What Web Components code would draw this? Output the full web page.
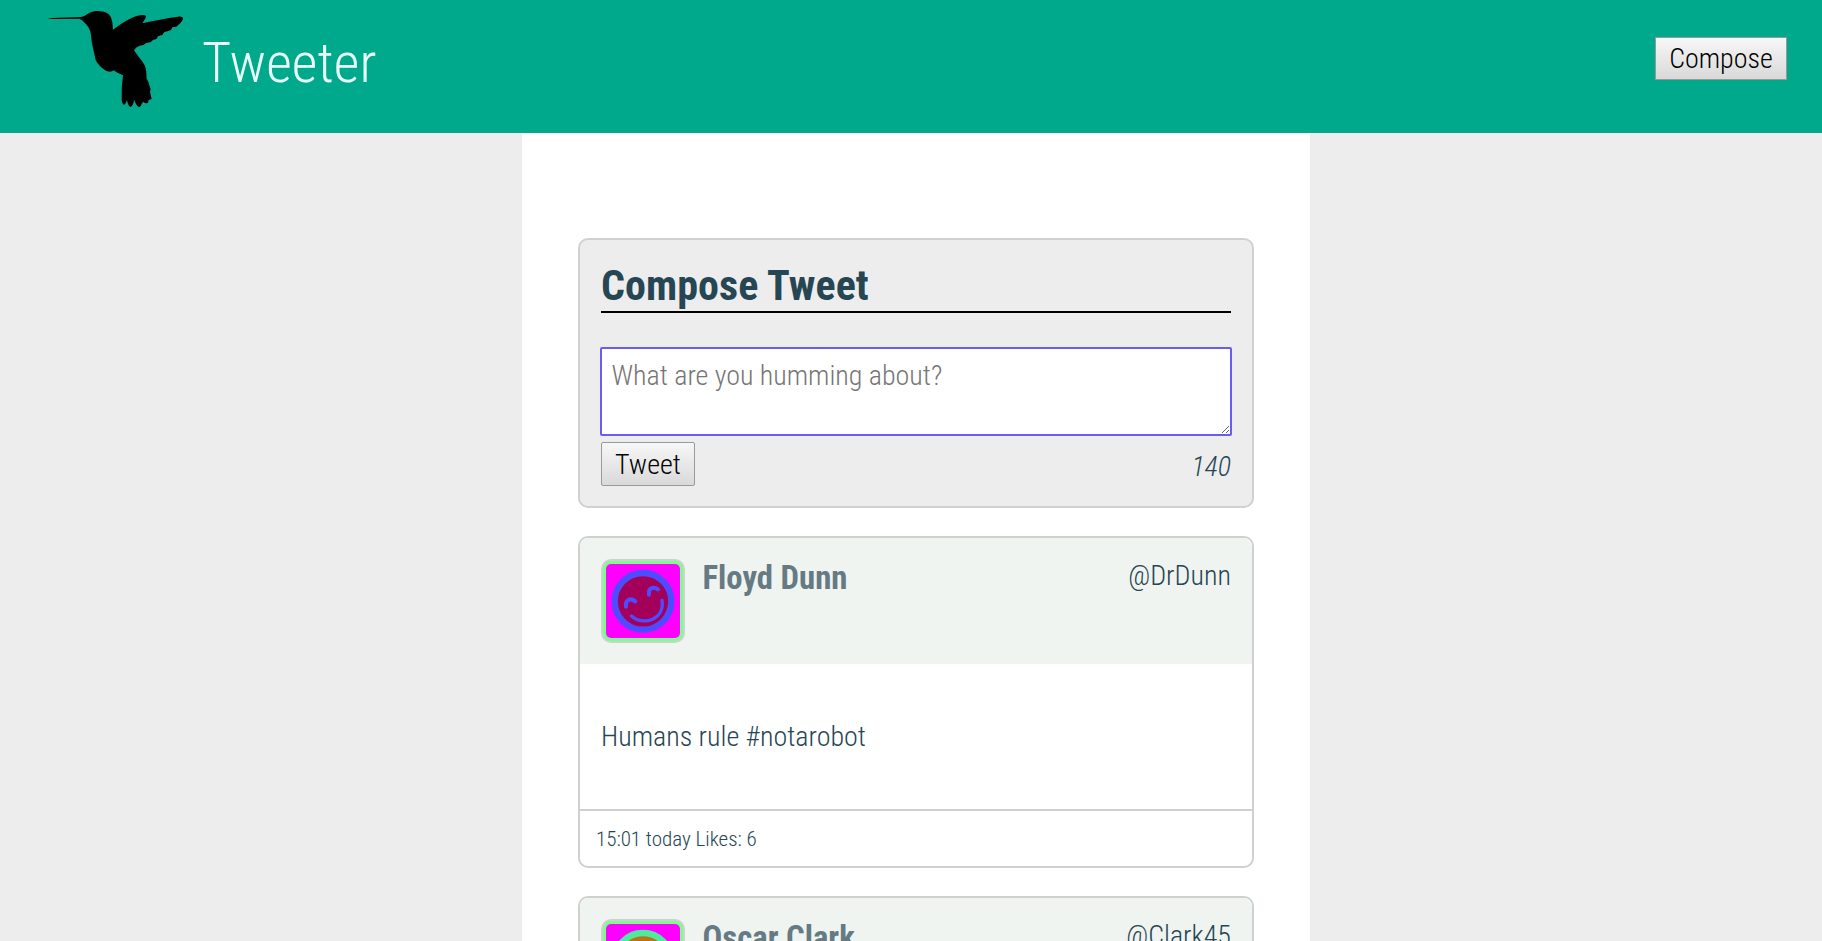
<!DOCTYPE html>
<html lang="en">
<head>
<meta charset="utf-8">
<title>Tweeter</title>
<style>
html,body{margin:0;height:100%}
body{background:#ededed;color:#264653;font:300 28px/33px "Roboto Condensed",Roboto,sans-serif;font-stretch:75%;overflow:hidden}
</style>
</head>
<body>
<tweeter-app></tweeter-app>
<script>
function define(name, html, setup) {
  const t = document.createElement('template');
  t.innerHTML = html;
  customElements.define(name, class extends HTMLElement {
    constructor() {
      super();
      this.attachShadow({mode: 'open'}).append(t.content.cloneNode(true));
    }
    connectedCallback() { if (setup) setup(this, this.shadowRoot); }
  });
}

define('humming-bird', `
<style>:host{display:block;width:160px;height:133px}svg{display:block}</style>
<svg width="160" height="133" viewBox="0 0 480 399"><path d="M22 57L38 54L122 51C132 51 140 42 149 38C162 31 192 31 204 41C215 49 218 64 219 89C242 70 274 52 293 47C303 44 316 45 318 48C317 57 310 64 307 70C339 62 380 55 414 50C423 49 430 51 429 57C426 66 416 74 409 80L397 82L393 90L383 94L373 96L367 105L355 108L349 117L339 120L332 127L318 129L311 135L299 137L288 143L282 151C294 169 306 181 314 196C319 207 319 221 320 236C325 244 327 251 329 259L332 268L330 276L335 297L326 300L324 308Q318 313 310 305L305 311Q304 320 297 322Q289 317 282 299Q280 318 271 321Q264 317 261 300Q258 312 252 315Q244 309 245 294Q244 260 249 226L228 216L222 211Q214 217 202 214C188 208 174 194 167 180C162 154 155 134 153 105C151 87 143 77 134 68Q126 59 118 56L39 57Z"/></svg>`);

define('classic-button', `
<style>:host{display:block}
button{display:block;box-sizing:border-box;width:100%;height:100%;margin:0;padding:0;border:1px solid #999;border-radius:var(--radius,0);background:linear-gradient(#f7f7f7,#d9d9d9);font:inherit;font-stretch:75%;line-height:33px;color:#000;text-align:center}</style>
<button><slot></slot></button>`);

define('nav-bar', `
<style>:host{display:flex;align-items:flex-start;height:133px;background:#00a98b;padding:0 35px 0 40px;box-sizing:border-box}
h1{margin:30px 0 0 2px;font-size:56px;line-height:66px;font-weight:300;color:#e8fffb}
classic-button{margin:37px 0 0 auto;width:132px;height:43px}</style>
<humming-bird></humming-bird><h1>Tweeter</h1><classic-button>Compose</classic-button>`);

define('compose-form', `
<style>:host{display:block;box-sizing:border-box;height:270px;border:2px solid #d0d0d0;border-radius:10px;background:#ededed;padding:21px}
h2{margin:0;font-size:42px;line-height:49px;height:50px;font-weight:700;letter-spacing:.08px;border-bottom:2px solid #000}
textarea{display:block;box-sizing:border-box;width:632px;height:89px;margin:34px -1px 0;padding:10px 9.5px;border:2px solid #6b5bf0;border-radius:2px;background:#fff;font:inherit;font-stretch:75%;line-height:33px;outline:0;overflow:hidden;resize:both}
textarea::placeholder{color:#757575}
div{display:flex;justify-content:space-between;margin-top:6px}
classic-button{width:94px;height:44px;--radius:2px}
i{margin-top:8px}</style>
<h2>Compose Tweet</h2><textarea placeholder="What are you humming about?"></textarea>
<div><classic-button>Tweet</classic-button><i>140</i></div>`);

define('robot-avatar', `
<style>:host{display:block;box-sizing:border-box;width:84px;height:84px;border:2px solid #d0d0d0;border-radius:10px;background:#7aff8c;padding:3px}
svg{display:block;border-radius:5px;background:#f0f}
circle{fill:var(--face);stroke:var(--ring)}path{fill:none;stroke:var(--ring);stroke-linecap:round}</style>
<svg width="74" height="74" viewBox="0 0 222 222"><circle cx="111" cy="112" r="85" stroke-width="19"/><path stroke-width="12" d="M60 128C57 110 71 99 88 112M129 92C126 75 139 65 156 76"/><path stroke-width="10" d="M76 156C110 187 177 168 168 109"/></svg>`);

define('tweet-card', `
<style>:host{display:block;box-sizing:border-box;height:332px;border:2px solid #d0d0d0;border-radius:10px;background:#fff;overflow:hidden}
header{display:flex;align-items:flex-start;height:126px;box-sizing:border-box;padding:21px 21px 0 21px;background:#eff4f1}
h3{margin:-1px 0 0 17.5px;font-size:32.76px;line-height:40px;font-weight:700;color:#667a84}
.handle{margin:0 0 0 auto}
main{height:145px;box-sizing:border-box;padding:56px 21px}
footer{border-top:2px solid #d0d0d0;padding:16px;font-size:21px;line-height:25px}</style>
<header><robot-avatar></robot-avatar><h3><slot name="name"></slot></h3><span class="handle"><slot name="handle"></slot></span></header>
<main><slot></slot></main><footer><slot name="meta"></slot></footer>`);

define('tweeter-app', `
<style>:host{display:block;height:941px;overflow:hidden}
main{box-sizing:border-box;width:788px;height:808px;margin-left:522px;background:#fff;padding:105px 56px 0;display:flex;flex-direction:column;gap:28px;overflow:hidden}
main>*{flex-shrink:0}
.floyd{--face:#a3005b;--ring:#4d4dff}
.oscar{--face:#bd7416;--ring:#4deb9d}</style>
<nav-bar></nav-bar>
<main><compose-form></compose-form>
<tweet-card class="floyd"><span slot="name">Floyd Dunn</span><span slot="handle">@DrDunn</span>Humans rule #notarobot<span slot="meta">15:01 today Likes: 6</span></tweet-card>
<tweet-card class="oscar"><span slot="name">Oscar Clark</span><span slot="handle">@Clark45</span></tweet-card></main>`);
</script>
</body>
</html>
